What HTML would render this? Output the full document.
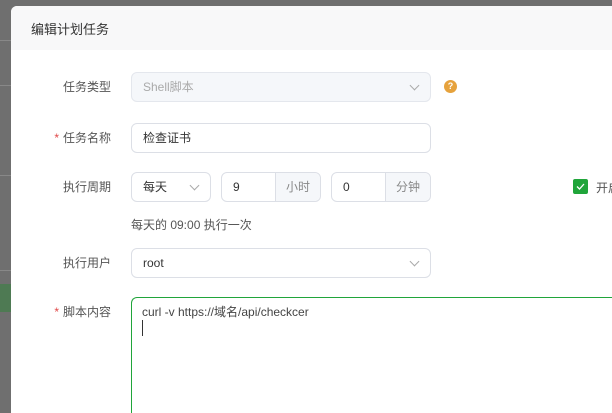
<!DOCTYPE html><html style="overflow:hidden;height:413px"><head><style>
body{margin:0;width:612px;height:413px;overflow:hidden;background:#6f6f6f;font-family:"Liberation Sans","Noto Sans CJK SC",sans-serif;font-size:12px;color:#333}
#w{position:relative;width:612px;height:413px;overflow:hidden}
.abs{position:absolute;white-space:nowrap}
.dlg{left:11px;top:6px;width:601px;height:407px;background:#fff;border-radius:6px 0 0 0;overflow:hidden}
.hd{left:0;top:0;width:100%;height:44px;background:#f8f8f9}
.lbl{width:100px;text-align:right;color:#555;font-size:12px;line-height:30px}
.inp{border:1px solid #dcdfe6;border-radius:6px;box-sizing:border-box;height:30px;line-height:28px;padding-left:11px;background:#fff}
.arr{position:absolute;right:12px;top:9px;width:6px;height:6px;border-right:1px solid #aaa;border-bottom:1px solid #aaa;transform:rotate(45deg)}
.add{position:absolute;right:0;top:0;bottom:0;width:44px;background:#f5f7fa;border-left:1px solid #dcdfe6;text-align:center;color:#888;border-radius:0 6px 6px 0}
.star{color:#e04848;margin-right:4px}
</style></head><body><div id="w">
<div class="abs" style="left:0;top:40px;width:11px;height:1px;background:#888"></div>
<div class="abs" style="left:0;top:85px;width:11px;height:1px;background:#888"></div>
<div class="abs" style="left:0;top:175px;width:11px;height:1px;background:#888"></div>
<div class="abs" style="left:0;top:270px;width:11px;height:1px;background:#888"></div>
<div class="abs" style="left:0;top:284px;width:11px;height:28px;background:#4e7a53"></div>
<div class="abs dlg">
<div class="abs hd"></div>
<div class="abs" style="left:20px;top:13px;font-size:13px;color:#333">编辑计划任务</div>
</div>
<div class="abs lbl" style="left:11px;top:72px">任务类型</div>
<div class="abs inp" style="left:131px;top:72px;width:300px;background:#f5f7fa;color:#aaa;border-color:#e4e7ed">Shell脚本<span class="arr"></span></div>
<div class="abs" style="left:444px;top:80px;width:13px;height:13px;border-radius:50%;background:#e6a23c;color:#fff;font-size:9px;line-height:13px;text-align:center;font-weight:bold">?</div>
<div class="abs lbl" style="left:11px;top:123px"><span class="star">*</span>任务名称</div>
<div class="abs inp" style="left:131px;top:123px;width:300px">检查证书</div>
<div class="abs lbl" style="left:11px;top:172px">执行周期</div>
<div class="abs inp" style="left:131px;top:172px;width:80px">每天<span class="arr"></span></div>
<div class="abs inp" style="left:221px;top:172px;width:100px">9<span class="add">小时</span></div>
<div class="abs inp" style="left:331px;top:172px;width:100px">0<span class="add">分钟</span></div>
<div class="abs" style="left:573px;top:179px;width:15px;height:15px;background:#20a53a;border-radius:2px"><svg width="15" height="15"><path d="M4 7.5l2.5 2.5 4.5-5" stroke="#fff" stroke-width="1.3" fill="none"/></svg></div>
<div class="abs" style="left:596px;top:179px;width:16px;overflow:hidden;color:#555">开启</div>
<div class="abs" style="left:131px;top:216px;color:#555">每天的 09:00 执行一次</div>
<div class="abs lbl" style="left:11px;top:248px">执行用户</div>
<div class="abs inp" style="left:131px;top:248px;width:300px">root<span class="arr"></span></div>
<div class="abs lbl" style="left:11px;top:297px;line-height:30px"><span class="star">*</span>脚本内容</div>
<div class="abs" style="left:131px;top:297px;width:481px;height:116px;border:1px solid #20a53a;border-right:none;border-bottom:none;border-radius:6px 0 0 0;box-sizing:border-box;padding:6px 10px;line-height:16px;color:#444">curl -v https://域名/api/checkcer<br><span style="display:inline-block;width:1px;height:16px;background:#333"></span></div>
</div></body></html>
